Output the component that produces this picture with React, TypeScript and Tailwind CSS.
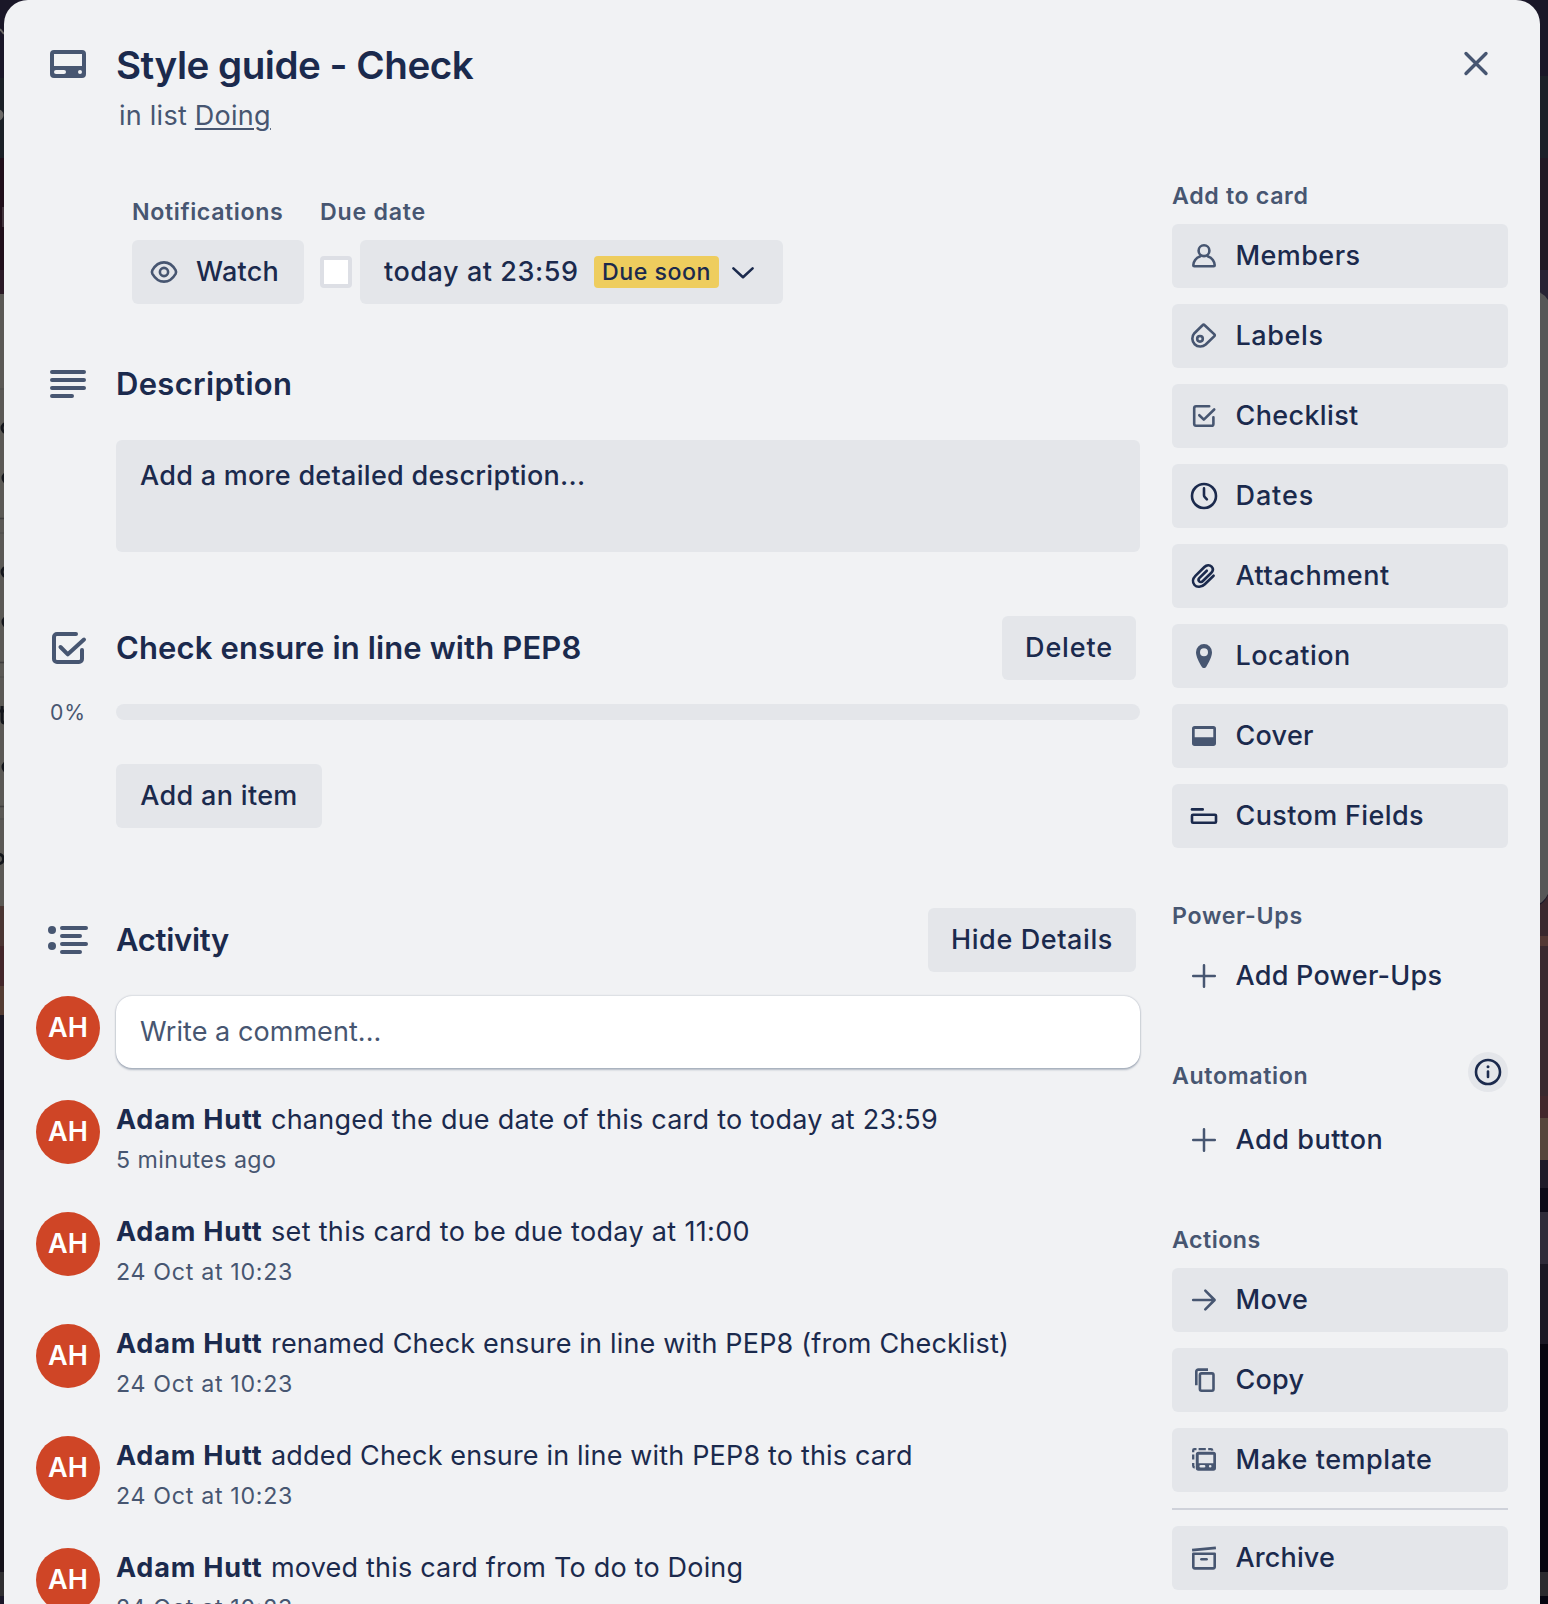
import type { ReactNode } from 'react';

type IconName =
  | 'member' | 'label' | 'checklist' | 'clock' | 'clip' | 'pin' | 'cover' | 'fields'
  | 'plus' | 'arrow' | 'copy' | 'template' | 'archive' | 'eye' | 'chevron';

const SHAPES: Record<IconName, ReactNode> = {
  member: (
    <>
      <circle cx="16" cy="10.7" r="5.4" />
      <path d="M11.9 16.6C8 17.8 5.3 21.6 5.3 25.3a1 1 0 0 0 1 1h19.4a1 1 0 0 0 1-1c0-3.7-2.7-7.5-6.6-8.7" />
    </>
  ),
  label: (
    <>
      <path d="M14.8 5a1.1 1.1 0 0 1 1.6 0l10 9.4a1.2 1.2 0 0 1 0 1.7l-8.7 8.4A8 8 0 0 1 6.4 13.2Z" />
      <circle cx="12" cy="18.8" r="2.8" />
    </>
  ),
  checklist: (
    <>
      <path d="M21.2 6.3H8A1.8 1.8 0 0 0 6.2 8v16A1.8 1.8 0 0 0 8 25.7h15.6a1.8 1.8 0 0 0 1.8-1.8v-6.6" />
      <path d="m11.3 15.2 4.5 4.4L26.2 9.5" />
    </>
  ),
  clock: (
    <>
      <circle cx="16" cy="16" r="12" />
      <path d="M16 8.4v6.8c0 .9.2 1.4.8 2l2.1 2.2" />
    </>
  ),
  clip: (
    <path d="m25.6 15.7-8.8 8.5c-3.3 3.2-8 3.4-10.3.8-2.3-2.7-1.9-6.4.9-9.2l9-8.8c2.2-2.1 5.4-2.2 7.2-.4 1.8 2 1.5 4.4-.5 6.4L14.9 21c-1.1 1.1-2.7 1.3-3.7.3-1-1.1-.8-2.4.3-3.5l7.3-7.1" />
  ),
  pin: (
    <path
      fill="currentColor"
      stroke="none"
      d="M16 4a8 8 0 0 0-8 8.2c0 4.3 3.3 10.4 5.6 14.2 1.2 2 3.6 2 4.8 0C20.7 22.6 24 16.5 24 12.2A8 8 0 0 0 16 4Zm0 12.3a4 4 0 1 1 0-8 4 4 0 0 1 0 8Z"
    />
  ),
  cover: (
    <path
      fill="currentColor"
      stroke="none"
      fillRule="evenodd"
      d="M6.7 6h18.6A2.7 2.7 0 0 1 28 8.7v14.6a2.7 2.7 0 0 1-2.7 2.7H6.7A2.7 2.7 0 0 1 4 23.3V8.7A2.7 2.7 0 0 1 6.7 6Zm0 3v8.3h18.6V9Z"
    />
  ),
  fields: (
    <>
      <path d="M4 9.4h10.7" />
      <rect x="4" y="14.7" width="24" height="8" rx="1" />
    </>
  ),
  plus: <path strokeWidth="2.5" d="M16 5.2v21.6M5.2 16h21.6" />,
  arrow: <path d="M5.2 16h21.3M17.3 6.6l9.3 9.4-9.3 9.4" />,
  copy: (
    <>
      <path strokeLinecap="butt" d="M20 5.6h-9.7a2 2 0 0 0-2 2v13.7" />
      <rect x="11.9" y="9.4" width="13.6" height="17.3" rx="1.6" />
    </>
  ),
  template: (
    <>
      <path
        fill="currentColor"
        stroke="none"
        fillRule="evenodd"
        d="M10.4 7.8h15a2.6 2.6 0 0 1 2.6 2.6v13.7a2.6 2.6 0 0 1-2.6 2.6h-15a2.6 2.6 0 0 1-2.6-2.6V10.4a2.6 2.6 0 0 1 2.6-2.6Zm.3 2.9v8.5h14.6v-8.5Zm2 10.3a1.3 1.3 0 0 0 0 2.6h3.4a1.3 1.3 0 0 0 0-2.6Zm9.5 0a1.3 1.3 0 1 0 0 2.6 1.3 1.3 0 0 0 0-2.6Z"
      />
      <path
        strokeWidth="2.3"
        strokeLinecap="butt"
        d="M5.2 8.2V6.3a1.1 1.1 0 0 1 1.1-1.1h2.2M10.6 5.2h7.2M20.2 5.2h2.5a1.6 1.6 0 0 1 1.7 1.4M5.2 10.6v5M5.2 19v2.7a1.8 1.8 0 0 0 1.5 1.8"
      />
    </>
  ),
  archive: (
    <>
      <path strokeLinecap="butt" d="M4.1 8.1 27.9 5.9" />
      <path d="M5.3 11.7h21.4v13.2a1.5 1.5 0 0 1-1.5 1.5H6.8a1.5 1.5 0 0 1-1.5-1.5Z" />
      <path d="M13.4 17.2h5.2" />
    </>
  ),
  eye: (
    <>
      <path d="M4.4 14.2C7.3 9.2 11.4 6.4 16 6.4s8.7 2.8 11.6 7.8c.6 1.2.6 2.4 0 3.6-2.9 5-7 7.8-11.6 7.8s-8.7-2.8-11.6-7.8c-.6-1.2-.6-2.4 0-3.6Z" />
      <circle cx="16" cy="16" r="4.1" />
    </>
  ),
  chevron: <path d="m6.4 12.4 9.6 8.8 9.6-8.8" />,
};

function Icon({ name, dark = false }: { name: IconName; dark?: boolean }) {
  return (
    <svg
      viewBox="0 0 32 32"
      className={`size-8 shrink-0 ${dark ? 'text-[#1b2a4d]' : 'text-[#475671]'}`}
      fill="none"
      stroke="currentColor"
      strokeWidth="2.6"
      strokeLinecap="round"
      strokeLinejoin="round"
    >
      {SHAPES[name]}
    </svg>
  );
}

function SectionIcon({ children }: { children: ReactNode }) {
  return (
    <div className="mr-4 flex w-16 shrink-0 justify-center">
      <svg
        viewBox="0 0 48 48"
        className="size-12 text-[#475671]"
        fill="none"
        stroke="currentColor"
        strokeWidth="4"
        strokeLinecap="round"
        strokeLinejoin="round"
      >
        {children}
      </svg>
    </div>
  );
}

function SideButton({ icon, label, track, dark = false, plain = false }: SideItem) {
  return (
    <button
      className={`flex h-16 w-full items-center gap-[15.5px] rounded-[6px] pl-4 text-[27px] font-medium ${plain ? '' : 'bg-[#e4e6ea]'}`}
    >
      <Icon name={icon} dark={dark} />
      <span className={track}>{label}</span>
    </button>
  );
}

type SideItem = { icon: IconName; label: string; track: string; dark?: boolean; plain?: boolean };

const ADD_ITEMS: SideItem[] = [
  { icon: 'member', label: 'Members', track: 'tracking-[0.42px]' },
  { icon: 'label', label: 'Labels', track: 'tracking-[0.6px]' },
  { icon: 'checklist', label: 'Checklist', track: 'tracking-[0.35px]' },
  { icon: 'clock', label: 'Dates', track: 'tracking-[0.9px]', dark: true },
  { icon: 'clip', label: 'Attachment', track: 'tracking-[0.55px]', dark: true },
  { icon: 'pin', label: 'Location', track: 'tracking-[0.5px]' },
  { icon: 'cover', label: 'Cover', track: 'tracking-[0.26px]' },
  { icon: 'fields', label: 'Custom Fields', track: 'tracking-[0.37px]', dark: true },
];

const ACTION_ITEMS: SideItem[] = [
  { icon: 'arrow', label: 'Move', track: 'tracking-[0.35px]' },
  { icon: 'copy', label: 'Copy', track: 'tracking-[0.24px]' },
  { icon: 'template', label: 'Make template', track: 'tracking-[0.54px]' },
];

const ACTIVITY = [
  { text: 'changed the due date of this card to today at 23:59', track: 'tracking-[0.235px]', time: '5 minutes ago', timeTrack: 'tracking-[0.43px]' },
  { text: 'set this card to be due today at 11:00', track: 'tracking-[0.323px]', time: '24 Oct at 10:23', timeTrack: 'tracking-[0.688px]' },
  { text: 'renamed Check ensure in line with PEP8 (from Checklist)', track: 'tracking-[0.192px]', time: '24 Oct at 10:23', timeTrack: 'tracking-[0.688px]' },
  { text: 'added Check ensure in line with PEP8 to this card', track: 'tracking-[0.168px]', time: '24 Oct at 10:23', timeTrack: 'tracking-[0.688px]' },
  { text: 'moved this card from To do to Doing', track: 'tracking-[0.198px]', time: '24 Oct at 10:23', timeTrack: 'tracking-[0.688px]' },
];

function Avatar() {
  return (
    <div className="mr-4 flex size-16 shrink-0 items-center justify-center rounded-full bg-[#cf4526] text-[27px] font-semibold text-white">
      AH
    </div>
  );
}

function SideLabel({ children, track }: { children: ReactNode; track: string }) {
  return <h3 className={`h-11 text-[23.2px] leading-8 font-semibold text-[#475671] ${track}`}>{children}</h3>;
}

/* Dimmed board that shows past both edges of the dialog. */
function Backdrop() {
  return (
    <div className="absolute inset-0 flex justify-between bg-[#1a1728]">
      <svg width="60" height="1604" viewBox="0 0 60 1604">
        <rect y="78" width="60" height="80" fill="#1b2026" />
        <rect y="158" width="60" height="112" fill="#200f1a" />
        <rect y="270" width="60" height="24" fill="#2b1a26" />
        <rect y="294" width="60" height="612" fill="#5b5955" />
        <path d="M0 389h4M0 533h4M0 677h4M0 819h4" stroke="#52504d" strokeWidth="1.5" />
        <path d="M0 518.500h4M0 662.500h4M0 806.500h4" stroke="#3f3e3e" strokeWidth="1.5" />
        <rect y="906" width="60" height="40" fill="#4a3532" />
        <rect y="946" width="60" height="40" fill="#432629" />
        <rect y="986" width="60" height="29" fill="#543c33" />
        <rect y="1015" width="60" height="557" fill="#1b1722" />
        <rect y="1080" width="60" height="40" fill="#15111c" />
        <rect y="1150" width="60" height="80" fill="#2a2530" />
        <rect y="1400" width="60" height="172" fill="#15121b" />
        <rect y="1572" width="60" height="24" fill="#302f31" />
        <path d="m0 29 4 5" stroke="#6b6967" strokeWidth="2" />
        <circle cx="-2" cy="115" r="5.500" fill="#6b6967" />
        <path d="M3 207v20" stroke="#4d4048" strokeWidth="1.5" />
        <g fill="none" stroke="#14161c" strokeWidth="3">
          <circle cx="7" cy="428" r="5" />
          <circle cx="8" cy="478" r="5" />
          <circle cx="7" cy="572" r="5" />
          <circle cx="8" cy="622" r="5" />
          <path d="M2 706v14q0 3 3 3M0 711h4" />
          <circle cx="8" cy="767" r="5" />
          <circle cx="-1" cy="859" r="4.500" />
        </g>
      </svg>
      <svg width="60" height="1604" viewBox="0 0 60 1604">
        <rect y="76" width="60" height="82" fill="#1c2129" />
        <rect y="158" width="60" height="112" fill="#211a25" />
        <rect y="270" width="60" height="40" fill="#282334" />
        <path d="M0 290h40q14 0 20 10v594q-4 9-14 12H0Z" fill="#575757" />
        <path d="M60 895q-3 8-12 12H0v213h60Z" fill="#3a282e" />
        <rect y="936" width="60" height="10" fill="#543834" />
        <rect y="1096" width="60" height="22" fill="#43272c" />
        <rect y="1118" width="60" height="42" fill="#57463c" />
        <rect y="1160" width="60" height="28" fill="#1f1b29" />
        <rect y="1188" width="60" height="24" fill="#0c0917" />
        <rect y="1212" width="60" height="52" fill="#2f2b39" />
        <rect y="1264" width="60" height="80" fill="#1b1824" />
        <rect y="1344" width="60" height="228" fill="#07050f" />
        <rect y="1572" width="60" height="24" fill="#2b2a2e" />
        <rect y="1596" width="60" height="8" fill="#050410" />
      </svg>
    </div>
  );
}

export default function App() {
  return (
    <div className="relative h-[1604px] w-[1548px] overflow-hidden font-[Inter,sans-serif] whitespace-nowrap text-[#1b2a4d]">
      <Backdrop />
      <main className="relative ml-1 h-[1604px] w-[1536px] overflow-hidden rounded-t-[24px] bg-[#f1f2f4] pl-8">
        <header className="flex h-40 pt-10">
          <SectionIcon>
            <path
              fill="currentColor"
              stroke="none"
              fillRule="evenodd"
              d="M10 10h28a4 4 0 0 1 4 4v20a4 4 0 0 1-4 4H10a4 4 0 0 1-4-4V14a4 4 0 0 1 4-4Zm0 4v12h28V14Zm2 16a2 2 0 0 0 0 4h8a2 2 0 0 0 0-4Zm24 0a2 2 0 1 0 0 4 2 2 0 0 0 0-4Z"
            />
          </SectionIcon>
          <div className="flex-1 pt-px">
            <h1 className="text-[38.6px] leading-[48px] font-semibold tracking-[-0.485px]">Style guide - Check</h1>
            <p className="mt-[7px] ml-[3px] text-[27px] leading-10 tracking-[0.25px] text-[#475671]">
              in list <a className="underline decoration-2 underline-offset-[3px]">Doing</a>
            </p>
          </div>
          <svg
            viewBox="0 0 48 48"
            className="mr-10 size-12 text-[#475671]"
            stroke="currentColor"
            strokeWidth="3.4"
            strokeLinecap="round"
          >
            <path d="m14 13.500 20 20M34 13.500l-20 20" />
          </svg>
        </header>

        <div className="flex gap-8">
          <div className="w-[1104px]">
            <section className="mt-9 ml-24 flex gap-4">
              <div className="w-[172px]">
                <h3 className="text-[23.2px] leading-8 font-semibold tracking-[0.6px] text-[#475671]">Notifications</h3>
                <button className="mt-3 flex h-16 w-full items-center gap-4 rounded-[6px] bg-[#e4e6ea] pl-4 text-[27px] font-medium tracking-[0.25px]">
                  <Icon name="eye" />
                  Watch
                </button>
              </div>
              <div>
                <h3 className="text-[23.2px] leading-8 font-semibold tracking-[0.75px] text-[#475671]">Due date</h3>
                <div className="mt-3 flex items-center gap-2">
                  <span className="size-8 rounded-[4px] border-4 border-[#dddfe5] bg-white" />
                  <button className="flex h-16 w-[423px] items-center rounded-[6px] bg-[#e4e6ea] pl-6 text-[27px] font-medium">
                    <span className="w-[210px] text-left tracking-[0.56px]">today at 23:59</span>
                    <span className="mr-2 flex h-8 w-[125px] items-center justify-center rounded-[4px] bg-[#eecd5e] text-[23.2px] tracking-[0.5px]">
                      Due soon
                    </span>
                    <Icon name="chevron" dark />
                  </button>
                </div>
              </div>
            </section>

            <section className="mt-[60px]">
              <div className="flex h-10 items-center">
                <SectionIcon>
                  <path d="M8 12h32M8 20h32M8 28h32M8 36h20" />
                </SectionIcon>
                <h2 className="text-[31px] leading-10 font-semibold tracking-[0.32px]">Description</h2>
              </div>
              <div className="mt-9 ml-20 h-28 rounded-[6px] bg-[#e4e6ea] px-6 pt-4 text-[27px] leading-10 font-medium tracking-[0.28px]">
                Add a more detailed description...
              </div>
            </section>

            <section className="mt-16">
              <div className="flex h-16 items-center">
                <SectionIcon>
                  <path d="M32 10H13a3 3 0 0 0-3 3v22a3 3 0 0 0 3 3h22a3 3 0 0 0 3-3v-9" />
                  <path d="m16.500 23 7.300 7.300L40 15.500" />
                </SectionIcon>
                <h2 className="flex-1 text-[31px] leading-10 font-semibold tracking-[0.13px]">
                  Check ensure in line with PEP8
                </h2>
                <button className="mr-1 h-16 w-[134px] rounded-[6px] bg-[#e4e6ea] text-[27px] font-medium tracking-[0.85px]">
                  Delete
                </button>
              </div>
              <div className="mt-6 flex h-4 items-center">
                <span className="mr-4 w-16 text-center text-[21.2px] leading-4 tracking-[0.8px] text-[#475671]">0%</span>
                <div className="h-4 flex-1 rounded-full bg-[#e4e6ea]" />
              </div>
              <button className="mt-11 ml-20 block h-16 w-[206px] rounded-[6px] bg-[#e4e6ea] text-[27px] font-medium tracking-[0.31px]">
                Add an item
              </button>
            </section>

            <section className="mt-20">
              <div className="flex h-16 items-center">
                <SectionIcon>
                  <path d="M18 12h24M18 20h18M18 28h24M18 36h18" />
                  <circle cx="8" cy="14" r="4" fill="currentColor" stroke="none" />
                  <circle cx="8" cy="30" r="4" fill="currentColor" stroke="none" />
                </SectionIcon>
                <h2 className="flex-1 text-[31px] leading-10 font-semibold tracking-[-0.3px]">Activity</h2>
                <button className="mr-1 h-16 w-[208px] rounded-[6px] bg-[#e4e6ea] text-[27px] font-medium tracking-[0.6px]">
                  Hide Details
                </button>
              </div>
              <div className="mt-6 flex">
                <Avatar />
                <div className="h-[72px] flex-1 rounded-[16px] bg-white pl-6 text-[27px] leading-[72px] tracking-[0.06px] text-[#475671] shadow-[0_2px_2px_rgba(9,30,66,0.25),0_0_2px_rgba(9,30,66,0.31)]">
                  Write a comment...
                </div>
              </div>
              <ul className="mt-8">
                {ACTIVITY.map((entry) => (
                  <li key={entry.text} className="flex h-28">
                    <Avatar />
                    <div>
                      <p className="flex gap-[7px] text-[27px] leading-10">
                        <b className="w-[148px] font-bold tracking-[0.82px]">Adam Hutt</b>
                        <span className={entry.track}>{entry.text}</span>
                      </p>
                      <p className={`mt-1 text-[23.2px] leading-8 text-[#475671] ${entry.timeTrack}`}>{entry.time}</p>
                    </div>
                  </li>
                ))}
              </ul>
            </section>
          </div>

          <aside className="w-[336px] pt-5">
            <SideLabel track="tracking-[0.65px]">Add to card</SideLabel>
            <div className="flex flex-col gap-4">
              {ADD_ITEMS.map((item) => (
                <SideButton key={item.label} {...item} />
              ))}
            </div>

            <div className="mt-[52px]">
              <SideLabel track="tracking-[0.68px]">Power-Ups</SideLabel>
              <SideButton icon="plus" label="Add Power-Ups" track="tracking-[0.26px]" plain />
            </div>

            <div className="mt-11">
              <div className="flex h-14 justify-between">
                <div className="pt-2">
                  <SideLabel track="tracking-[0.64px]">Automation</SideLabel>
                </div>
                <span className="flex size-10 items-center justify-center rounded-full bg-[#e4e6ea]">
                  <svg viewBox="0 0 32 32" className="size-8" fill="none" stroke="#1b2a4d" strokeWidth="2.6" strokeLinecap="round">
                    <circle cx="16" cy="16" r="12" />
                    <path d="M16 15.500v5.400" />
                    <circle cx="16" cy="10.800" r="1.500" fill="#1b2a4d" stroke="none" />
                  </svg>
                </span>
              </div>
              <SideButton icon="plus" label="Add button" track="tracking-[0.54px]" plain />
            </div>

            <div className="mt-[52px]">
              <SideLabel track="tracking-[0.48px]">Actions</SideLabel>
              <div className="flex flex-col gap-4">
                {ACTION_ITEMS.map((item) => (
                  <SideButton key={item.label} {...item} />
                ))}
                <hr className="h-0.5 border-0 bg-[#cfd2da]" />
                <SideButton icon="archive" label="Archive" track="tracking-[0.13px]" />
              </div>
            </div>
          </aside>
        </div>
      </main>
    </div>
  );
}
